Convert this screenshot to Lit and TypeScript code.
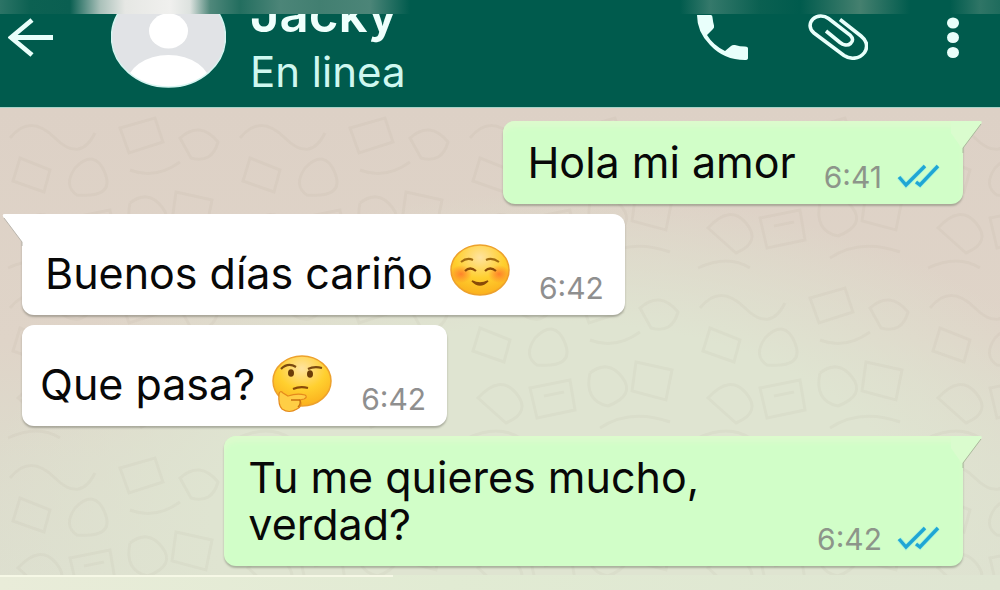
import { LitElement, html, css, svg, nothing } from "lit";
import { customElement, property } from "lit/decorators.js";

type Emoji = "smile" | "thinking";

interface Message {
  text: string;
  time: string;
  sent: boolean;
  tail: boolean;
  emoji?: Emoji;
}

const messages: Message[] = [
  { text: "Hola mi amor", time: "6:41", sent: true, tail: true },
  { text: "Buenos días cariño", time: "6:42", sent: false, tail: true, emoji: "smile" },
  { text: "Que pasa?", time: "6:42", sent: false, tail: false, emoji: "thinking" },
  { text: "Tu me quieres mucho, verdad?", time: "6:42", sent: true, tail: true },
];

const smile = svg`
  <defs>
    <radialGradient id="cheek">
      <stop offset="0" stop-color="#ff6a2a" stop-opacity=".75"/>
      <stop offset="1" stop-color="#ff6a2a" stop-opacity="0"/>
    </radialGradient>
  </defs>
  <ellipse cx="12" cy="30" rx="11" ry="9" fill="url(#cheek)"/>
  <ellipse cx="50" cy="30" rx="11" ry="9" fill="url(#cheek)"/>
  <path d="M12 18q6-5 12-2M37 16q6-3 13 2" stroke="#a06a10" stroke-width="2" fill="none"/>
  <path d="M16 27q5-5 11 0M36 27q5-5 11 0" stroke="#8a4a08" stroke-width="2.2" fill="none"/>
  <path d="M23 37q8 8 16 0q-8 4-16 0z" fill="#8a4a08" stroke="#8a4a08" stroke-width="1.5"/>`;

const thinking = svg`
  <path d="M10 14q7-7 15-2M37 14q6-3 14-1" stroke="#7a4a10" stroke-width="2.2" fill="none"/>
  <ellipse cx="20" cy="18" rx="3" ry="3.8" fill="#6b3c08"/>
  <ellipse cx="39" cy="19" rx="3" ry="3.8" fill="#6b3c08"/>
  <path d="M22 34q7-3 15-1" stroke="#8a4a08" stroke-width="2.2" fill="none"/>
  <path d="M8 39q1-4 4-1l5 3q9-3 17-1q3 2-1 4l-4 1q3 6-3 9q-8 5-15 0q-4-4-3-15z" fill="#ffce45" stroke="#e58a1c" stroke-width="1.200"/>
  <path d="M20 45h9M29 45q1 4-2 7" stroke="#c9720f" stroke-width="1.400" fill="none"/>`;

@customElement("chat-bubble")
class ChatBubble extends LitElement {
  @property({ attribute: false }) message!: Message;

  static styles = css`
    :host { display: block; max-width: 78.5%; }
    .bubble {
      position: relative;
      display: flex;
      align-items: flex-end;
      box-sizing: border-box;
      border-radius: 12px;
      box-shadow: 0 2px 2px rgba(90, 90, 80, 0.4);
      color: #080808;
    }
    .sent { background: #d1fec8; padding: 18px 23px 18px 24px; box-shadow: inset 0 6px 5px #dcfbcd, 0 2px 2px rgba(90, 100, 80, 0.4); }
    .received { background: #fff; padding: 36px 21px 18px 23px; }
    .joined { padding-left: 18px; }
    .text { display: flex; align-items: center; gap: 16px; margin: 0; font-size: 43px; line-height: 47px; }
    .sent .text { flex: 1; }
    .meta { display: flex; align-items: center; gap: 15px; margin-left: 28px; color: #8d958a; font-size: 30px; line-height: 24px; }
    .received .meta { color: #8f8f8f; margin-bottom: -3px; }
    .sent .meta { margin-bottom: -4px; }
    .emoji { width: 62px; height: 56px; margin: -8px 0 -4px; flex: none; overflow: visible; }
    .ticks { width: 43px; height: 26px; }
    .tail { position: absolute; top: 0; width: 32px; height: 32px; }
    .sent .tail { right: -20px; }
    .received .tail { left: -20px; }
  `;

  render() {
    const m = this.message;
    return html`
      <div class="bubble ${m.sent ? "sent" : "received"} ${m.tail ? "" : "joined"}">
        ${m.tail
          ? m.sent
            ? html`<svg class="tail" viewBox="0 0 32 32" aria-hidden="true"><path d="M0 0H29q3 0 1 3L12 27V29L0 12z" fill="#dafcce"/><path d="M30 3L12 27V32" stroke="#aab89c" fill="none"/></svg>`
            : html`<svg class="tail" viewBox="0 0 32 32" aria-hidden="true"><path d="M32 0H3q-4 0-1 4L20 28V30L32 12z" fill="#fff"/><path d="M2 4L20 28V32" stroke="#b9b5ac" fill="none"/></svg>`
          : nothing}
        <p class="text">
          <span>${m.text}</span>
          ${m.emoji
            ? html`<svg class="emoji" viewBox="0 0 62 56" role="img" aria-label=${m.emoji}>
                <defs>
                  <radialGradient id="face" cx=".5" cy=".25" r=".75">
                    <stop offset="0" stop-color="#ffe3a0"/>
                    <stop offset=".55" stop-color="#ffd02f"/>
                    <stop offset="1" stop-color="#fbb01d"/>
                  </radialGradient>
                </defs>
                <ellipse cx="31" cy="26" rx="29" ry="25" fill="url(#face)" stroke="#eda12c" stroke-width="1.500"/>
                ${m.emoji === "smile" ? smile : thinking}
              </svg>`
            : nothing}
        </p>
        <div class="meta">
          <time>${m.time}</time>
          ${m.sent
            ? html`<svg class="ticks" viewBox="0 0 43 26" role="img" aria-label="Leído">
                <path d="M2 13l7 8L28 2M19 18l4 3L41 2" fill="none" stroke="#7fe6ee" stroke-width="5" opacity=".5"/>
                <path d="M2 13l7 8L28 2M19 18l4 3L41 2" fill="none" stroke="#1fa6d4" stroke-width="3.400"/>
              </svg>`
            : nothing}
        </div>
      </div>
    `;
  }
}

@customElement("app-root")
class AppRoot extends LitElement {
  static styles = css`
    :host {
      display: flex;
      flex-direction: column;
      min-height: 100vh;
      overflow: hidden;
      font-family: Inter, Roboto, "Liberation Sans", sans-serif;
    }
    .header { background: #005b4d; border-bottom: 1px solid #a9d3c9; }
    .status-strip {
      height: 14px;
      background: linear-gradient(90deg, #2c7466 0, #0c6152 3%, #0a5f51 7%, #a9c0b9 10%, #e6e7e4 12.5%, #f0f0ee 17%,
        #dde2df 19%, #50887b 21%, #236e5f 24%, #4c8578 28%, #427f71 32%, #4c8578 37%, #005b4d 41%, #005b4d 68%,
        #35796b 71%, #0a6051 76%, #005b4d 80%, #45806f 86%, #005b4d 91%, #005b4d 95%, #2f7566 98%, #1f6c5d 100%);
    }
    .toolbar { display: flex; align-items: flex-start; height: 93px; padding: 0 22px 0 8px; overflow: hidden; }
    .icon-button { display: block; flex: none; padding: 0; border: 0; background: none; color: #e9fffb; cursor: pointer; }
    .icon-button svg { display: block; height: 46px; }
    .back svg { width: 46px; }
    .avatar { flex: none; width: 115px; height: 74px; margin-left: 57px; }
    .contact { flex: 1; align-self: flex-end; margin-left: 24px; color: #effffc; }
    .name { margin: 0; font-size: 51px; font-weight: 600; line-height: 70px; }
    .presence { margin: 0 0 12px; font-size: 42px; line-height: 46px; color: #cff8f0; }
    .actions { display: flex; gap: 60px; }
    .call svg { width: 52px; }
    .attach svg { width: 60px; }
    .more svg { width: 50px; }
    .conversation {
      flex: 1;
      background:
        url("data:image/svg+xml,%3Csvg xmlns='http://www.w3.org/2000/svg' width='230' height='170' fill='none' stroke='%23857b6c' stroke-opacity='.06' stroke-width='3'%3E%3Cpath d='M10 30q20-25 45 0t40-5M20 50l30 12-6 22-31-11zM75 60q20-20 30 5t-28 22q-14-9-2-27M120 20l35-10 8 24-34 11zM130 62q25 10 50-8M180 30q20-18 38 4q-6 22-27 16zM18 120q22-24 38-5t-10 30zM70 110l40-8 5 30-38 8zM84 118l20-4M130 95q18-14 32 4t-14 29q-24-5-18-33M176 84l36 8-6 30-34-9zM140 150q30-20 70-6M8 160q30-14 52 0'/%3E%3C/svg%3E"),
        radial-gradient(ellipse 58% 70% at 56% 88%, #dfe4d1 0, #dfe4d1 60%, rgba(223, 228, 209, 0) 100%),
        linear-gradient(180deg, #ddd1c6 0, #dfd4c8 50%, #dddbcc 75%, #dddfcf 100%);
    }
    .messages { display: flex; flex-direction: column; gap: 10px; margin: 0; padding: 13px 37px 9px 22px; list-style: none; }
    .row { display: flex; }
    .row.sent { justify-content: flex-end; }
    .composer-edge { height: 15px; background: linear-gradient(90deg, #e9ecd9, #e1ebd3 45%, #dfe5d2); }
    .composer-line { width: 39.3%; height: 2px; background: #f6f8e6; }
  `;

  render() {
    return html`
      <header class="header">
        <div class="status-strip"></div>
        <div class="toolbar">
          <button class="icon-button back" aria-label="Atrás">
            <svg viewBox="0 0 46 46"><path d="M45 23.500H3M24 6L3 23.500L24 41" fill="none" stroke="currentColor" stroke-width="4.800"/></svg>
          </button>
          <svg class="avatar" viewBox="0 0 115 74" role="img" aria-label="Foto de Jacky">
            <defs><clipPath id="round"><ellipse cx="57.500" cy="23" rx="57" ry="50"/></clipPath></defs>
            <g clip-path="url(#round)">
              <rect y="-30" width="115" height="110" fill="#e1e3e6"/>
              <ellipse cx="57.500" cy="17" rx="19.500" ry="17.500" fill="#fff"/>
              <ellipse cx="57.500" cy="71" rx="42" ry="30" fill="#fff"/>
            </g>
            <ellipse cx="57.500" cy="23" rx="57" ry="50" fill="none" stroke="#d6f5f1" stroke-width="1.500"/>
          </svg>
          <div class="contact">
            <h1 class="name">Jacky</h1>
            <p class="presence">En linea</p>
          </div>
          <div class="actions">
            <button class="icon-button call" aria-label="Llamar">
              <svg viewBox="0 0 52 46"><path d="M1 1H15q1.500 0 1.500 2.500q.5 4.500 1.500 8q.5 2-1 3.500L11 21q6 10 18 16l6-5q1.500-1.500 4-1q5 1.500 10 1.500q3 0 3 2V44q0 2-3 2Q28 46 14 31Q1 18 1 1z" fill="currentColor"/></svg>
            </button>
            <button class="icon-button attach" aria-label="Adjuntar">
              <svg viewBox="0 0 60 46"><path d="M32 5.500L53 22C59 27 60 33 56.500 38.500C51 45.500 42 45.500 36 41.500L6 19C1 15 1 9 5 5C9 1 16 1 20.500 4.500L42 21C45 24 45.500 27 42.500 29.500C39.500 32 35 31 32 28.500L18 17" fill="none" stroke="currentColor" stroke-width="3.600"/></svg>
            </button>
            <button class="icon-button more" aria-label="Más opciones">
              <svg viewBox="0 0 50 46" fill="currentColor"><ellipse cx="25" cy="9" rx="6" ry="5.500"/><ellipse cx="25" cy="23.500" rx="6" ry="5.500"/><ellipse cx="25" cy="38.500" rx="6" ry="5.500"/></svg>
            </button>
          </div>
        </div>
      </header>
      <main class="conversation">
        <ol class="messages">
          ${messages.map(
            (m) => html`<li class="row ${m.sent ? "sent" : ""}"><chat-bubble .message=${m}></chat-bubble></li>`,
          )}
        </ol>
      </main>
      <footer class="composer-edge"><div class="composer-line"></div></footer>
    `;
  }
}
